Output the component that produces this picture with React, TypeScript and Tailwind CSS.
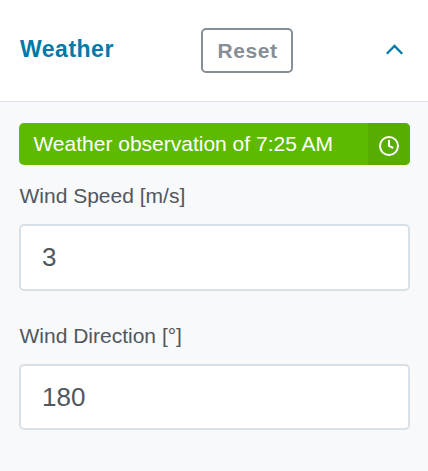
export default function App() {
  return (
    <div className="h-[471px] w-[428px] overflow-hidden bg-[#f7f9fb] font-['Liberation_Sans',Arial,sans-serif] text-[#50575e]">
      <header className="flex h-[102px] items-center border-b border-[#dfe4ea] bg-white pr-[25px] pl-5">
        <h1 className="w-[181px] pb-[3px] text-[23px] leading-[26px] font-bold tracking-[0.5px] text-[#007aa8]">Weather</h1>
        <button className="h-[45px] w-[92px] rounded-[5px] border-2 border-[#868e96] pl-px text-[21px] leading-[24px] font-bold tracking-[0.6px] text-[#868e96]">Reset</button>
        <svg className="mb-[3px] ml-auto" width="17" height="11" viewBox="0 0 17 11" fill="none" stroke="#007aa8" strokeWidth="2.3">
          <path d="M0.8 9.8 L8.5 2 L16.2 9.8" />
        </svg>
      </header>
      <main className="pt-[21px] pr-[18px] pl-[19px]">
        <div className="flex h-[42px] overflow-hidden rounded-[5px] bg-[#5eba00] text-white">
          <span className="w-[349px] pl-[14.4px] text-[21px] leading-[42px] whitespace-nowrap">Weather observation of 7:25 AM</span>
          <span className="flex flex-1 items-center justify-center bg-[#57ad00] pt-1">
            <svg width="20" height="20" viewBox="0 0 20 20" fill="none" stroke="white" strokeWidth="2">
              <circle cx="10" cy="10" r="9" />
              <path d="M10 4 V9.8 L14.3 12" />
            </svg>
          </span>
        </div>
        <label className="block h-[59px] pt-[19px] pl-[0.5px] text-[21px] leading-6">Wind Speed [m/s]</label>
        <input className="block h-[67px] w-full rounded-[5px] border-2 border-[#d8e0e8] bg-white px-[21px] text-[26px]" defaultValue="3" />
        <label className="block h-[73px] pt-[33px] pl-[0.5px] text-[21px] leading-6">Wind Direction [°]</label>
        <input className="block h-[66px] w-full rounded-[5px] border-2 border-[#d8e0e8] bg-white px-[21px] text-[26px]" defaultValue="180" />
      </main>
    </div>
  );
}
